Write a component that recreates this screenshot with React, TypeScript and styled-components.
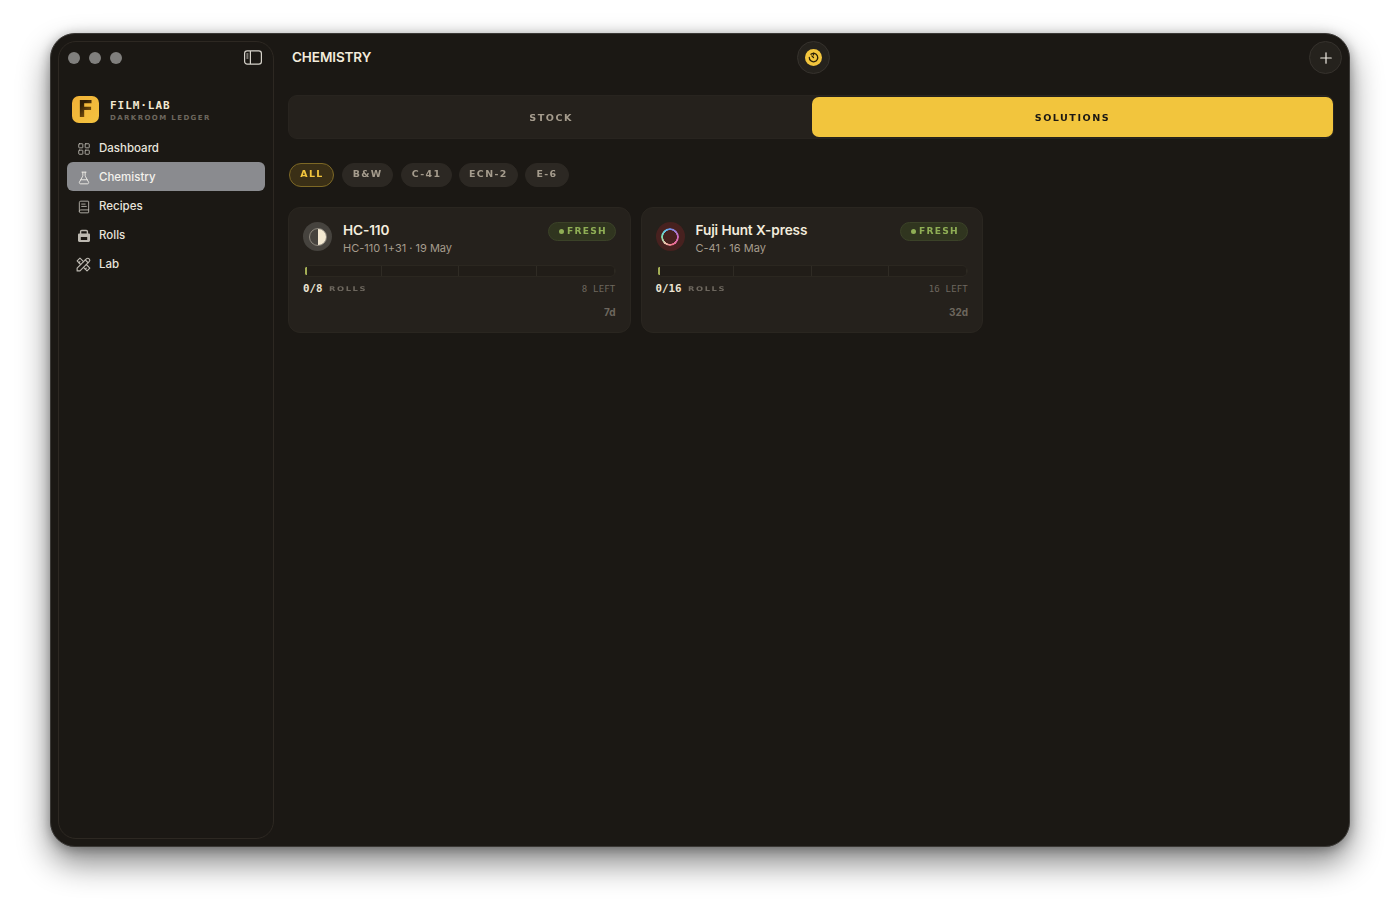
import React from 'react'
import styled, { createGlobalStyle } from 'styled-components'
import { LayoutGrid, FlaskConical, BookText, Plus } from 'lucide-react'
import { TbTools } from 'react-icons/tb'

const WIDE = '"DejaVu Sans", "Liberation Sans", sans-serif'
const UI = 'Inter, "Liberation Sans", sans-serif'
const MONO = '"DejaVu Sans Mono", "Liberation Mono", monospace'

const GlobalStyle = createGlobalStyle`
  html, body { margin: 0; padding: 0; background: #fff; }
  body { font-family: ${UI}; }
  * { box-sizing: border-box; }
`

const Page = styled.div`
  width: 1400px;
  height: 913px;
  padding: 33px 50px 66px;
  overflow: hidden;
`

const Window = styled.div`
  width: 1300px;
  height: 814px;
  display: flex;
  padding: 7px 0 7px 7px;
  background: #1b1814;
  border-radius: 25px;
  border: 1px solid #3a3835;
  box-shadow: 0 16px 32px rgba(0, 0, 0, 0.48), 0 2px 12px rgba(0, 0, 0, 0.3);
`

const Sidebar = styled.aside`
  width: 216px;
  flex: none;
  display: flex;
  flex-direction: column;
  padding: 0 8px;
  border: 1px solid #2d2822;
  border-radius: 18px;
`

const TitleRow = styled.div`
  height: 31px;
  display: flex;
  align-items: center;
  justify-content: space-between;
  padding: 0 3px 0 1px;
`

const Lights = styled.div`
  display: flex;
  gap: 9px;
`

const Light = styled.span`
  width: 12px;
  height: 12px;
  border-radius: 50%;
  background: #807f7d;
`

const Brand = styled.div`
  display: flex;
  align-items: center;
  gap: 11px;
  margin: 23px 0 10px 5px;
`

const LogoTile = styled.div`
  width: 27px;
  height: 27px;
  border-radius: 7px;
  display: flex;
  align-items: center;
  justify-content: center;
  background: linear-gradient(135deg, #f2b136, #f3c340);
`

const LogoLetter = styled.span`
  font: 700 23px/27px "DejaVu Sans", sans-serif;
  background: linear-gradient(135deg, #2e1d06 30%, #96640f 80%);
  -webkit-background-clip: text;
  background-clip: text;
  color: transparent;
`

const BrandText = styled.div`
  display: flex;
  flex-direction: column;
  gap: 2px;
  padding-top: 3px;
`

const BrandName = styled.span`
  font: 700 11px/13px ${MONO};
  letter-spacing: 0.95px;
  color: #f3e9d2;
`

const BrandSub = styled.span`
  font: 700 7px/9px ${WIDE};
  letter-spacing: 1.4px;
  color: #6d675e;
`

const Nav = styled.nav`
  display: flex;
  flex-direction: column;
`

const NavItem = styled.div<{ $active?: boolean }>`
  height: 29px;
  display: flex;
  align-items: center;
  gap: 8px;
  padding: 2px 10px 0;
  border-radius: 6px;
  font: 500 11.5px/1 ${UI};
  color: ${({ $active }) => ($active ? '#f3f1ec' : '#e8e4dc')};
  background: ${({ $active }) => ($active ? '#8a8b8f' : 'transparent')};
  svg { flex: none; color: ${({ $active }) => ($active ? '#f3f1ec' : '#bdb9b1')}; }
`

const Main = styled.main`
  flex: 1;
  min-width: 0;
  display: flex;
  flex-direction: column;
  padding: 0 15px 0 14px;
`

const Header = styled.header`
  height: 33px;
  display: grid;
  grid-template-columns: 1fr 33px 1fr;
  align-items: center;
  padding-left: 4px;
`

const PageTitle = styled.h1`
  margin: 0;
  font: 600 13.5px/1 ${UI};
  letter-spacing: -0.1px;
  color: #f3ecdc;
`

const RoundButton = styled.button<{ $end?: boolean }>`
  width: 33px;
  height: 33px;
  padding: 0;
  display: flex;
  align-items: center;
  justify-content: center;
  justify-self: ${({ $end }) => ($end ? 'end' : 'auto')};
  margin-right: ${({ $end }) => ($end ? '-8px' : '0')};
  border-radius: 50%;
  border: 1px solid #36322d;
  background: #25221d;
  color: #f0ece4;
`

const TimerDot = styled.span`
  width: 17px;
  height: 17px;
  display: flex;
  align-items: center;
  justify-content: center;
  border-radius: 50%;
  background: #f2c53d;
`

const WideText = styled.span<{ $origin?: string; $scale?: number }>`
  display: inline-block;
  transform: scaleX(${({ $scale }) => $scale ?? 1.2});
  transform-origin: ${({ $origin }) => $origin ?? 'center'};
`

const Tabs = styled.div`
  height: 44px;
  margin-top: 21px;
  padding: 1px 0 1px 1px;
  display: grid;
  grid-template-columns: 1fr 1fr;
  border: 1px solid #28241f;
  border-radius: 9px;
  background: #25211c;
`

const Tab = styled.div<{ $active?: boolean }>`
  display: flex;
  align-items: center;
  justify-content: center;
  padding-top: 3px;
  border-radius: 7px;
  font: 700 8px/1 ${WIDE};
  letter-spacing: 1.25px;
  color: ${({ $active }) => ($active ? '#1b1814' : '#a59c8d')};
  background: ${({ $active }) => ($active ? '#f2c53d' : 'transparent')};
`

const Filters = styled.div`
  display: flex;
  gap: 7.5px;
  margin: 24px 0 0 0.5px;
`

const Chip = styled.div<{ $active?: boolean }>`
  height: 24px;
  padding: 0 12px;
  display: flex;
  align-items: center;
  border-radius: 12px;
  font: 700 8px/1 ${WIDE};
  letter-spacing: 1.15px;
  color: ${({ $active }) => ($active ? '#f2c53d' : '#a59c8d')};
  background: ${({ $active }) => ($active ? '#3a2f16' : '#2c2823')};
  border: 1px solid ${({ $active }) => ($active ? '#7d6825' : '#2c2823')};
`

const CardGrid = styled.div`
  display: grid;
  grid-template-columns: repeat(2, 342.5px);
  gap: 10px;
  margin-top: 20px;
`

const Card = styled.article`
  height: 126px;
  padding: 14px 14px 0;
  border: 1px solid #2a2620;
  border-radius: 12px;
  background: #25211c;
`

const CardTop = styled.div`
  display: flex;
  align-items: flex-start;
  gap: 11px;
`

const FilmIcon = styled.div<{ $bg: string }>`
  width: 29px;
  height: 29px;
  flex: none;
  display: flex;
  align-items: center;
  justify-content: center;
  border-radius: 50%;
  background: ${({ $bg }) => $bg};
`

const HalfDisc = styled.span`
  width: 18px;
  height: 18px;
  border-radius: 50%;
  border: 1px solid #8d887e;
  background: linear-gradient(90deg, transparent 50%, #f3e9d2 50%);
`

const ColorRing = styled.span`
  width: 18px;
  height: 18px;
  border-radius: 50%;
  background: conic-gradient(#6f8fe8, #d06ac0 25%, #ee6f8a 45%, #f0c0a8 60%, #7fe0b0 75%, #62c4e6 90%, #6f8fe8);
  -webkit-mask: radial-gradient(circle, transparent 6.6px, #000 7.1px);
  mask: radial-gradient(circle, transparent 6.6px, #000 7.1px);
`

const CardHeading = styled.div`
  flex: 1;
  min-width: 0;
`

const CardTitle = styled.div`
  font: 600 13.6px/17px ${UI};
  letter-spacing: -0.1px;
  color: #f3ecdc;
`

const CardMeta = styled.div`
  margin-top: 2px;
  font: 400 11px/15px ${UI};
  color: #a59c8d;
`

const Badge = styled.div`
  width: 68px;
  height: 19px;
  padding-left: 10px;
  display: flex;
  align-items: center;
  gap: 3px;
  border-radius: 10px;
  border: 1px solid #3b4228;
  background: #30351f;
  font: 700 8px/1 ${WIDE};
  letter-spacing: 1.1px;
  color: #8fae55;
`

const BadgeDot = styled.span`
  width: 5px;
  height: 5px;
  border-radius: 50%;
  background: #8fae55;
`

const Meter = styled.div`
  position: relative;
  display: grid;
  grid-template-columns: repeat(4, 1fr);
  height: 12px;
  margin-top: 9px;
  border-radius: 6px;
  background: #211d18;
  border: 1px solid #2b2720;
  overflow: hidden;
`

const MeterCell = styled.span`
  border-right: 1px solid #2f2b24;
  &:last-child { border-right: 0; }
`

const MeterMark = styled.span`
  position: absolute;
  left: 1px;
  top: 1px;
  width: 2px;
  height: 8px;
  background: #a3ad55;
`

const StatRow = styled.div`
  display: flex;
  align-items: center;
  justify-content: space-between;
  margin-top: 6px;
  height: 13px;
`

const Count = styled.div`
  display: flex;
  align-items: center;
  gap: 6px;
`

const CountValue = styled.span`
  font: 700 10.8px/1 ${MONO};
  color: #ece4d2;
`

const CountLabel = styled.span`
  font: 700 6.5px/1 ${WIDE};
  letter-spacing: 1.25px;
  color: #6d675e;
`

const LeftText = styled.span`
  font: 400 9px/1 ${MONO};
  letter-spacing: 0.2px;
  color: #6d675e;
`

const AgeText = styled.div`
  margin-top: 11px;
  text-align: right;
  font: 700 10px/1 ${UI};
  color: #6d675e;
`

const RollsIcon = () => (
  <svg width="14" height="14" viewBox="0 0 14 14" fill="none" stroke="currentColor" strokeWidth="1.4">
    <path d="M3.6 5V2.6c0-.7.4-1.1 1.1-1.1h4.6c.7 0 1.1.4 1.1 1.1V5" />
    <path fill="currentColor" fillRule="evenodd" stroke="none" d="M2.4 4.6h9.2c.9 0 1.4.5 1.4 1.4v5.6c0 .9-.5 1.4-1.4 1.4H2.4c-.9 0-1.4-.5-1.4-1.4V6c0-.9.5-1.4 1.4-1.4ZM3.8 8v3h6.4V8H3.8Z" />
  </svg>
)

const solutions = [
  { name: 'HC-110', meta: 'HC-110 1+31 · 19 May', bg: '#46433e', icon: <HalfDisc />, used: '0/8', left: '8 LEFT', age: '7d' },
  { name: 'Fuji Hunt X-press', meta: 'C-41 · 16 May', bg: '#47211f', icon: <ColorRing />, used: '0/16', left: '16 LEFT', age: '32d' },
]

const navItems = [
  { label: 'Dashboard', icon: <LayoutGrid size={14} strokeWidth={1.5} /> },
  { label: 'Chemistry', icon: <FlaskConical size={14} strokeWidth={1.5} />, active: true },
  { label: 'Recipes', icon: <BookText size={14} strokeWidth={1.5} /> },
  { label: 'Rolls', icon: <RollsIcon /> },
  { label: 'Lab', icon: <TbTools size={17} strokeWidth={1.6} style={{ marginLeft: -2, marginRight: -1 }} /> },
]

const SidebarToggle = () => (
  <svg width="18" height="15" viewBox="0 0 18 15" fill="none" stroke="#d6d2ca" strokeWidth="1.2">
    <rect x="0.6" y="0.9" width="16.8" height="13.2" rx="2.6" />
    <path d="M6.4 1v13" />
    <path d="M2.4 4h2M2.4 6h2M2.4 8h2" strokeWidth="1" />
  </svg>
)

const TimerGlyph = () => (
  <svg width="11" height="11" viewBox="0 0 12 12" fill="none" stroke="#2a2008" strokeWidth="1.4" strokeLinecap="round">
    <path d="M3.2 2.4A4.6 4.6 0 1 1 1.4 6" />
    <path d="M6 1.2V3.2M6 6 4.2 4.2" />
  </svg>
)

export default function App() {
  return (
    <Page>
      <GlobalStyle />
      <Window>
        <Sidebar>
          <TitleRow>
            <Lights>
              <Light />
              <Light />
              <Light />
            </Lights>
            <SidebarToggle />
          </TitleRow>
          <Brand>
            <LogoTile>
              <LogoLetter>F</LogoLetter>
            </LogoTile>
            <BrandText>
              <BrandName>FILM·LAB</BrandName>
              <BrandSub>DARKROOM LEDGER</BrandSub>
            </BrandText>
          </Brand>
          <Nav>
            {navItems.map((item) => (
              <NavItem key={item.label} $active={item.active}>
                {item.icon}
                {item.label}
              </NavItem>
            ))}
          </Nav>
        </Sidebar>
        <Main>
          <Header>
            <PageTitle>CHEMISTRY</PageTitle>
            <RoundButton>
              <TimerDot>
                <TimerGlyph />
              </TimerDot>
            </RoundButton>
            <RoundButton $end>
              <Plus size={18} strokeWidth={1.6} />
            </RoundButton>
          </Header>
          <Tabs>
            <Tab><WideText>STOCK</WideText></Tab>
            <Tab $active><WideText>SOLUTIONS</WideText></Tab>
          </Tabs>
          <Filters>
            {['ALL', 'B&W', 'C-41', 'ECN-2', 'E-6'].map((label) => (
              <Chip key={label} $active={label === 'ALL'}>
                <WideText $scale={1.18}>{label}</WideText>
              </Chip>
            ))}
          </Filters>
          <CardGrid>
            {solutions.map((s) => (
              <Card key={s.name}>
                <CardTop>
                  <FilmIcon $bg={s.bg}>{s.icon}</FilmIcon>
                  <CardHeading>
                    <CardTitle>{s.name}</CardTitle>
                    <CardMeta>{s.meta}</CardMeta>
                  </CardHeading>
                  <Badge>
                    <BadgeDot />
                    <WideText $origin="left" $scale={1.14}>FRESH</WideText>
                  </Badge>
                </CardTop>
                <Meter>
                  <MeterCell />
                  <MeterCell />
                  <MeterCell />
                  <MeterCell />
                  <MeterMark />
                </Meter>
                <StatRow>
                  <Count>
                    <CountValue>{s.used}</CountValue>
                    <CountLabel><WideText $origin="left" $scale={1.28}>ROLLS</WideText></CountLabel>
                  </Count>
                  <LeftText>{s.left}</LeftText>
                </StatRow>
                <AgeText>{s.age}</AgeText>
              </Card>
            ))}
          </CardGrid>
        </Main>
      </Window>
    </Page>
  )
}
